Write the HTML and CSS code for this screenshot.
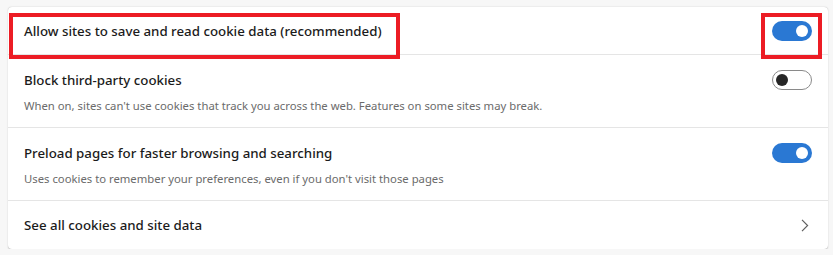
FILE: index.html
```html
<!DOCTYPE html>
<html lang="en">
<head>
<meta charset="utf-8">
<title>Cookies</title>
<link rel="stylesheet" href="styles.css">
</head>
<body>
<div class="card">
  <div class="row row-short">
    <div class="title">Allow sites to save and read cookie data (recommended)</div>
    <span class="toggle on"></span>
  </div>
  <div class="row row-tall">
    <div class="text">
      <div class="title">Block third-party cookies</div>
      <div class="desc">When on, sites can't use cookies that track you across the web. Features on some sites may break.</div>
    </div>
    <span class="toggle off"></span>
  </div>
  <div class="row row-tall">
    <div class="text">
      <div class="title">Preload pages for faster browsing and searching</div>
      <div class="desc">Uses cookies to remember your preferences, even if you don't visit those pages</div>
    </div>
    <span class="toggle on"></span>
  </div>
  <div class="row row-short last">
    <div class="title">See all cookies and site data</div>
    <svg class="chevron" width="8" height="13" viewBox="0 0 8 13"><path d="M1 0.8 L6.6 6.5 L1 12.2" fill="none" stroke="#5f5f5f" stroke-width="1.2"/></svg>
  </div>
  <div class="mark mark-text"></div>
  <div class="mark mark-toggle"></div>
</div>
</body>
</html>
```

FILE: styles.css
```css
html, body {
  margin: 0;
  padding: 0;
  background: #f7f7f7;
}
body {
  font-family: "Noto Sans", "Open Sans", sans-serif;
  color: #1b1b1b;
}
.card {
  position: relative;
  margin: 7px 0 0 8px;
  width: 820px;
  background: #fff;
  border-radius: 4px;
  box-shadow: 0 0.5px 1.5px rgba(0,0,0,0.22), 0 0 0.5px rgba(0,0,0,0.12);
}
.row {
  display: flex;
  justify-content: space-between;
  padding: 0 16px;
  border-bottom: 1px solid #e5e5e5;
}
.row.last { border-bottom: none; }
.row-short {
  height: 47px;
  align-items: center;
}
.row.last { height: 48px; }
.row-tall {
  padding-top: 15px;
  padding-bottom: 13px;
  align-items: flex-start;
}
.title {
  font-size: 13.3px;
  line-height: 20px;
  font-weight: 500;
  color: #1b1b1b;
}
.desc {
  margin-top: 8px;
  font-size: 11.3px;
  line-height: 16px;
  color: #6b6b6b;
}
.toggle {
  position: relative;
  box-sizing: border-box;
  width: 40px;
  height: 20px;
  border-radius: 10px;
  flex: none;
}
.toggle.on {
  background: #2a78d3;
}
.toggle.off {
  border: 1px solid #8a8a8a;
  background: #fff;
}
.toggle::after {
  content: "";
  position: absolute;
  top: 4px;
  width: 12px;
  height: 12px;
  border-radius: 50%;
}
.toggle.on::after {
  right: 4px;
  background: #fff;
}
.toggle.off::after {
  top: 3px;
  left: 3px;
  background: #262626;
}
.chevron {
  margin-right: 3px;
}
.mark {
  position: absolute;
  box-sizing: border-box;
  border: 4px solid #ec1c24;
}
.mark-text {
  left: 1px;
  top: 6px;
  width: 391px;
  height: 46px;
}
.mark-toggle {
  left: 753px;
  top: 6px;
  width: 61px;
  height: 46px;
}
```
